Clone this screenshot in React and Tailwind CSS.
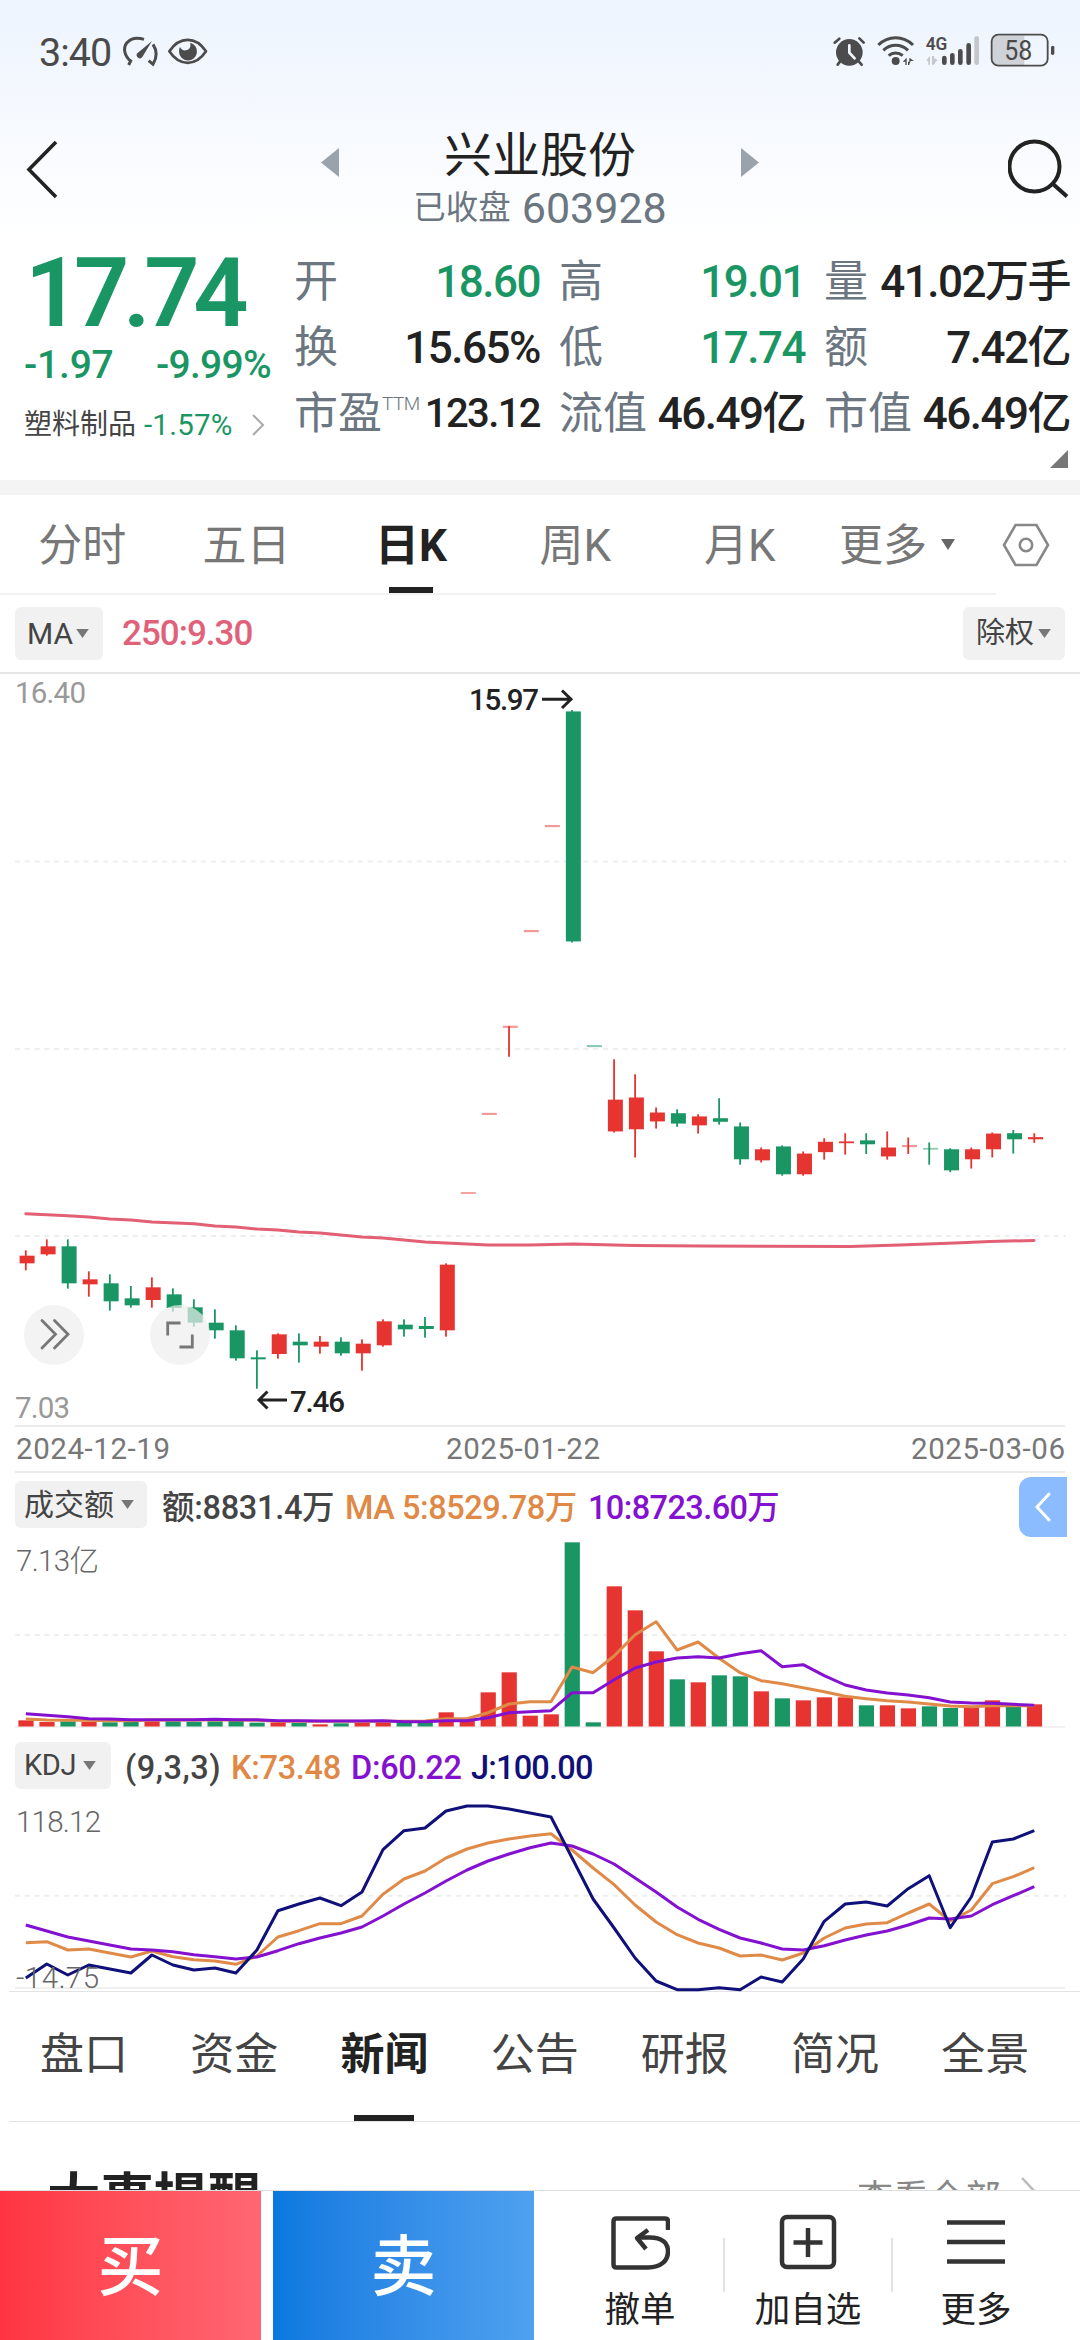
import React from "react";

const STEP = 21.01;
const X0 = 25.8;
const xAt = (i) => X0 + i * STEP;

const RED = "#e63430";
const GREEN = "#1a9664";

// [direction, body top, body bottom, high, low]
const firstHalf = [
  ["R", 227, 250, 211, 271], ["R", 199, 223, 178, 227], ["G", 199, 310, 178, 326],
  ["R", 298, 313, 274, 350], ["G", 310, 364, 283, 392], ["G", 355, 376, 318, 383],
  ["R", 322, 360, 292, 383], ["G", 343, 384, 325, 395], ["G", 382, 428, 358, 440],
  ["G", 428, 451, 388, 476], ["G", 451, 535, 436, 542], ["G", 532, 538, 511, 626],
  ["R", 463, 522, 460, 536], ["G", 485, 496, 460, 548], ["R", 485, 500, 468, 521],
  ["G", 485, 520, 472, 527], ["R", 491, 520, 478, 572], ["R", 424, 496, 418, 500],
  ["G", 434, 448, 418, 470], ["G", 438, 447, 411, 473], ["R", 254, 451, 250, 470],
].map(([d, ...v]) => [d, ...v.map((y) => 1180 + y / 3)]);

const secondHalf = [
  ["r", 1462, 1467, 1464, 1465], ["r", 1240, 1246, 1243, 1243], ["r", 996, 1002, 997, 1083],
  ["r", 728, 734, 731, 731], ["r", 434, 440, 437, 437], ["G", 116, 760, 112, 763],
  ["g", 1050, 1056, 1053, 1053], ["R", 1203, 1292, 1090, 1295], ["R", 1197, 1286, 1132, 1365],
  ["R", 1239, 1264, 1225, 1284], ["G", 1241, 1270, 1230, 1279], ["R", 1250, 1275, 1244, 1298],
  ["G", 1255, 1265, 1199, 1273], ["G", 1278, 1370, 1267, 1385], ["R", 1342, 1373, 1337, 1379],
  ["G", 1334, 1412, 1331, 1416], ["R", 1354, 1412, 1348, 1416], ["R", 1321, 1350, 1311, 1371],
  ["R", 1320, 1325, 1297, 1357], ["G", 1317, 1328, 1297, 1355], ["R", 1337, 1362, 1292, 1371],
  ["r", 1330, 1336, 1309, 1355], ["g", 1338, 1343, 1323, 1385], ["G", 1342, 1401, 1339, 1406],
  ["R", 1342, 1370, 1337, 1396], ["R", 1298, 1342, 1295, 1365], ["G", 1297, 1314, 1288, 1354],
  ["R", 1308, 1314, 1297, 1324],
].map(([d, ...v]) => [d, ...v.map((y) => 670 + y / 2.8)]);

const candles = [...firstHalf, ...secondHalf];

const ma250 = [
  [25.8, 1213.7], [67.8, 1215.7], [88.8, 1217], [110, 1219], [131, 1220], [152, 1222],
  [194, 1223.8], [215, 1226], [236, 1227], [257, 1229], [278, 1230], [299, 1232], [320, 1233],
  [341, 1235], [362, 1237], [383, 1238], [404, 1240], [425, 1242], [446, 1243], [488, 1245],
  [530, 1245], [573, 1244], [635, 1245.5], [701, 1246], [850, 1246.5], [900, 1245], [955, 1243], [990, 1241.5], [1034, 1240.5],
];

const volumes = [
  "R781", "R786", "G784", "R785", "G787", "G786", "R784", "G784", "G785", "G784", "G783", "G788",
  "R787", "G789", "R793", "G790", "R788", "R787", "G789", "G787", "R757", "R779", "R697", "R637",
  "R767", "R763", "G247", "G787", "R379", "R451", "R574", "G658", "R667", "G646", "G649", "R694",
  "G715", "R721", "R712", "R712", "G736", "R736", "R745", "G739", "G744", "R742", "R721", "G740", "R733",
];
const ma5 = [777, 780, 781, 781, 782, 782, 780, 780, 780, 780, 780, 781, 784, 784, 784, 784, 784, 784, 784, 783, 776, 776, 758, 732, 725, 725, 621, 638, 588, 524, 485, 570, 546, 595, 638, 662, 671, 683, 695, 709, 716, 722, 726, 732, 738, 740, 737, 737, 737];
const ma10 = [761, 766, 770, 776, 777, 779, 779, 779, 779, 778, 779, 779, 782, 782, 783, 783, 783, 782, 785, 785, 782, 782, 773, 758, 755, 752, 698, 698, 659, 624, 606, 594, 590, 594, 581, 572, 620, 614, 647, 675, 690, 699, 705, 713, 726, 729, 730, 733, 736];

const kLine = [638, 635, 660, 657, 669, 681, 663, 680, 689, 693, 703, 678, 621, 602, 581, 581, 558, 493, 447, 423, 384, 357, 339, 327, 318, 311, 360, 414, 464, 525, 576, 614, 639, 654, 678, 675, 690, 669, 624, 594, 582, 578, 549, 522, 573, 540, 461, 440, 413];
const dLine = [585, 603, 621, 633, 645, 657, 660, 665, 674, 680, 687, 681, 662, 641, 624, 609, 591, 558, 522, 489, 453, 420, 393, 372, 353, 339, 348, 372, 402, 444, 486, 531, 568, 598, 624, 639, 657, 660, 647, 630, 615, 603, 585, 564, 567, 558, 524, 497, 470];
const jLine = [744, 702, 735, 705, 717, 729, 675, 705, 720, 714, 729, 660, 542, 522, 504, 527, 486, 359, 302, 294, 243, 228, 228, 237, 249, 261, 384, 507, 594, 684, 753, 779, 779, 773, 779, 741, 756, 687, 574, 522, 516, 528, 476, 437, 593, 501, 336, 327, 302];

const toPoints = (arr, top) => arr.map((v, i) => `${xAt(i).toFixed(1)},${(top + v / 3).toFixed(1)}`).join(" ");

function Dashed({ y }) {
  return <line x1="15" x2="1066" y1={y} y2={y} stroke="#ecefed" strokeWidth="2" strokeDasharray="5 4.8" />;
}

function Caret({ className = "" }) {
  return (
    <svg viewBox="0 0 14 10" className={`h-[9px] w-[13px] ${className}`}>
      <path d="M0 0h14L7 10z" fill="#777" />
    </svg>
  );
}

function StatusBar() {
  return (
    <div className="flex h-[102px] items-center justify-between pl-[39px] pr-[10px]">
      <div className="flex h-[64px] items-center">
        <span className="mt-[3px] text-[39.5px] leading-[64px] tracking-[-1px] text-[#4a4a4a]">3:40</span>
        <svg viewBox="270 0 270 192" className="ml-[9px] mt-[2px] h-[64px] w-[90px]" fill="none" stroke="#4c4c4c">
          <path d="M296 135l6-12c-18-14-24-38-12-54 12-14 30-18 52-11" strokeWidth="9" />
          <path d="M369 73c12 18 12 40 0 60l-13-11" strokeWidth="9" />
          <path d="M366 63L322 100a9 9 0 1 0 15 11z" fill="#4c4c4c" stroke="none" />
          <path d="M418 94c30-46 80-46 110 0c-30 46-80 46-110 0z" strokeWidth="8" strokeLinejoin="round" />
          <path d="M480 68a27 27 0 1 1-33 27c0-6 1-10 3-14c4 8 10 11 17 10c12-2 17-12 13-23z" fill="#4c4c4c" stroke="none" />
        </svg>
      </div>
      <svg viewBox="0 0 750 192" className="mt-[2px] h-[64px] w-[250px]">
        <g fill="none" stroke="#4c4c4c" strokeWidth="8" strokeLinecap="round">
          <circle cx="88" cy="97" r="40" fill="#4c4c4c" stroke="none" />
          <path d="M88 76v22l16 17" stroke="#f2f7fe" />
          <path d="M44 68l14-12M118 55l13 13M62 122l-9 12M114 122l11 12" />
          <path d="M175 75c30-29 74-29 104 0M190 91c22-20 52-20 74 0M206 107c12-11 30-11 42 0" strokeLinecap="butt" strokeWidth="9" />
        </g>
        <circle cx="227" cy="123" r="12" fill="#4c4c4c" />
        <path d="M248 125l12-12v22h-4v-10zM264 113v22h4l0-10h-4zM268 113l14 10h-10l-4 10z" fill="#4c4c4c" />
        <text x="317" y="91" fontSize="54" fontWeight="600" textLength="65" lengthAdjust="spacingAndGlyphs" fill="#4c4c4c">4G</text>
        <path d="M318 122l12-14v26h-5v-12zM336 108h6v6l14 8h-7l-7 12h-6z" fill="#c3c6ca" />
        <g stroke="#4c4c4c" strokeWidth="14" strokeLinecap="round">
          <path d="M373 114v14M397 106v22M421 94v34M446 76v52" />
          <path d="M470 55v73" stroke="#c3c6ca" />
        </g>
        <path d="M534 47h79v88h-79q-16 0-16-16v-56q0-16 16-16z" fill="#cfd2d6" />
        <rect x="515" y="44" width="168" height="93" rx="20" fill="none" stroke="#4c4c4c" strokeWidth="5.5" />
        <rect x="693" y="77" width="10" height="28" rx="5" fill="#4c4c4c" />
        <text x="553" y="120" fontSize="84" textLength="84" lengthAdjust="spacingAndGlyphs" fill="#4a4a4a">58</text>
      </svg>
    </div>
  );
}

function TitleBar() {
  return (
    <div className="flex h-[138px] items-start justify-between">
      <svg viewBox="0 0 56 60" className="ml-[16px] mt-[38px] h-[60px] w-[56px]" fill="none" stroke="#222" strokeWidth="3.6">
        <path d="M40 2L13 29.500L40 57" />
      </svg>
      <div className="flex w-[438px] flex-col items-center">
        <div className="mt-[26px] flex h-[56px] w-full items-center justify-between">
          <svg viewBox="0 0 18 29" className="mt-[12px] h-[29px] w-[18px]"><path d="M18 0v29L0 14.500z" fill="#9aa3ab" /></svg>
          <h1 className="text-[48px] leading-[56px] text-[#222]">兴业股份</h1>
          <svg viewBox="0 0 18 29" className="mt-[12px] h-[29px] w-[18px]"><path d="M0 0v29L18 14.500z" fill="#9aa3ab" /></svg>
        </div>
        <div className="mt-px flex h-[46px] items-center text-[#6b7681]">
          <span className="text-[32.5px] leading-[46px]">已收盘</span>
          <span className="ml-[11px] text-[43px] leading-[46px]">603928</span>
        </div>
      </div>
      <svg viewBox="0 0 64 64" className="mr-[8px] mt-[34px] h-[64px] w-[64px]" fill="none" stroke="#222" strokeWidth="4">
        <circle cx="26.500" cy="30.500" r="25" />
        <path d="M45 48L59 60.500" />
      </svg>
    </div>
  );
}

const stats = [
  [
    { label: "开", value: "18.60", green: true },
    { label: "高", value: "19.01", green: true },
    { label: "量", value: "41.02万手" },
  ],
  [
    { label: "换", value: "15.65%" },
    { label: "低", value: "17.74", green: true },
    { label: "额", value: "7.42亿" },
  ],
  [
    { label: "市盈", sup: "TTM", value: "123.12", small: true },
    { label: "流值", value: "46.49亿" },
    { label: "市值", value: "46.49亿" },
  ],
];

function Quote() {
  return (
    <div className="flex h-[240px] bg-white">
      <div className="flex w-[294px] flex-col pl-[24px]">
        <div className="mt-[7px] h-[92px] pl-px text-[97px] font-semibold leading-[92px] tracking-[-6.4px] text-[#1a9664]">17.74</div>
        <div className="mt-[5px] flex h-[42px] items-center justify-between pr-[23px] text-[39px] font-medium leading-[42px] tracking-[-0.2px] text-[#1a9664]">
          <span>-1.97</span>
          <span className="tracking-[-0.7px]">-9.99%</span>
        </div>
        <div className="mt-[17px] flex h-[44px] items-center">
          <span className="text-[28px] leading-[44px] text-[#444]">塑料制品</span>
          <span className="ml-[8px] text-[29.5px] leading-[44px] tracking-[0.2px] text-[#1a9664]">-1.57%</span>
          <svg viewBox="0 0 14 22" className="ml-auto mr-[29px] h-[22px] w-[14px]" fill="none" stroke="#aaa" strokeWidth="2">
            <path d="M2 1l10 10L2 21" />
          </svg>
        </div>
      </div>
      <div className="flex flex-1 flex-col">
        <div className="mt-[9px] flex flex-col">
          {stats.map((row, r) => (
            <div key={r} className="flex h-[66px] gap-[19px]">
              {row.map((s) => (
                <div key={s.label} className="flex w-[246px] items-center justify-between">
                  <span className="flex whitespace-nowrap text-[44px] leading-[66px] text-[#6b7681]">
                    {s.label}
                    {s.sup && <span className="mt-[13px] text-[19px] font-light leading-[20px] tracking-[-0.5px]">{s.sup}</span>}
                  </span>
                  <span
                    className={`whitespace-nowrap font-medium leading-[66px] ${s.small ? "text-[40px] tracking-[-1.6px]" : "text-[44px] tracking-[-1.5px]"} ${s.green ? "text-[#1a9664]" : "text-[#222]"}`}
                  >
                    {s.value}
                  </span>
                </div>
              ))}
            </div>
          ))}
        </div>
        <svg viewBox="0 0 18 18" className="ml-auto mr-[12px] mt-[3px] h-[18px] w-[18px]"><path d="M18 0v18H0z" fill="#777" /></svg>
      </div>
    </div>
  );
}

function PeriodTabs() {
  return (
    <div className="flex h-[100px]">
      <div className="flex w-[996px] border-b-2 border-[#f2f2f2]">
        {["分时", "五日", "日K", "周K", "月K"].map((t) => (
          <div key={t} className="flex w-[164.4px] flex-col items-center justify-between">
            <span className={t === "日K" ? "mt-[15px] text-[44px] font-bold leading-[72px] text-[#222]" : "mt-[15px] text-[44px] leading-[72px] text-[#777]"}>{t}</span>
            {t === "日K" && <span className="h-[6px] w-[44px] bg-[#222]" />}
          </div>
        ))}
        <div className="ml-[17px] flex items-start">
          <span className="mt-[15px] text-[44px] leading-[72px] text-[#777]">更多</span>
          <svg viewBox="0 0 14 11" className="ml-[14px] mt-[44px] h-[11px] w-[14px]"><path d="M0 0h14L7 11z" fill="#666" /></svg>
        </div>
      </div>
      <svg viewBox="0 0 48 44" className="ml-[6px] mt-[28px] h-[44px] w-[48px]" fill="none" stroke="#888" strokeWidth="2.6">
        <path d="M13.500 2h21L46 22 34.500 42h-21L2 22z" />
        <circle cx="24" cy="22" r="6.200" />
      </svg>
    </div>
  );
}

function ChartTools() {
  return (
    <div className="flex h-[79px] items-center justify-between border-b-2 border-[#e6e6e6] px-[15px]">
      <div className="flex items-center">
        <div className="flex h-[53px] w-[88px] items-center rounded-[6px] bg-[#f1f1f1] pl-[12px]">
          <span className="text-[30px] leading-[53px] text-[#444]">MA</span>
          <Caret className="ml-[3px]" />
        </div>
        <span className="ml-[19px] text-[35px] font-medium leading-[53px] tracking-[-1px] text-[#e0627a]">250:9.30</span>
      </div>
      <div className="flex h-[53px] w-[102px] items-center rounded-[6px] bg-[#f1f1f1] pl-[13px]">
        <span className="text-[29px] leading-[53px] text-[#444]">除权</span>
        <Caret className="ml-[4px]" />
      </div>
    </div>
  );
}

function Candle({ i, c }) {
  const [d, top, bottom, high, low] = c;
  const thin = d === "r" || d === "g";
  const color = d === "R" || d === "r" ? RED : GREEN;
  const x = xAt(i);
  return (
    <g fill={color}>
      {low - high > 2 && <rect x={x - 0.9} y={high} width="1.8" height={low - high} />}
      <rect x={x - 6.2} y={top} width="15" height={bottom - top} opacity={thin ? 0.5 : 1} />
    </g>
  );
}

function PriceChart() {
  return (
    <div className="relative h-[799px]">
      <svg viewBox="0 674 1080 799" className="block h-[799px] w-[1080px]">
        {[861.5, 1049, 1236].map((y) => <Dashed key={y} y={y} />)}
        <path d="M15 1426H1065M15 1472H1065" stroke="#e9eceb" strokeWidth="2" />
        {candles.map((c, i) => <Candle key={i} i={i} c={c} />)}
        <polyline points={ma250.map((p) => p.join(",")).join(" ")} fill="none" stroke="#e25f74" strokeWidth="3" strokeLinejoin="round" strokeLinecap="round" />
        <g fontSize="29.5">
          <text x="15" y="703" fill="#999" textLength="71">16.40</text>
          <text x="15" y="1418" fill="#999" textLength="55">7.03</text>
          <g fill="#777">
            <text x="16" y="1459" textLength="154">2024-12-19</text>
            <text x="446" y="1459" textLength="154">2025-01-22</text>
            <text x="911" y="1459" textLength="154">2025-03-06</text>
          </g>
          <g fill="#222" fontWeight="500">
            <text x="469" y="709.500" textLength="70">15.97</text>
            <text x="290" y="1411.500" textLength="55">7.46</text>
          </g>
        </g>
        <g fill="none" stroke="#222" strokeWidth="3">
          <path d="M542 699.300H570M562 690.500L571 699.300L562 708" />
          <path d="M287 1400H259M267.500 1391.500L259 1400L267.500 1408.500" />
        </g>
      </svg>
      <div className="absolute left-[24px] top-[631px] flex h-[60px] w-[60px] rounded-full bg-[#eeeeee]/70">
        <svg viewBox="24 1305 60 60" className="h-[60px] w-[60px]" fill="none" stroke="#777" strokeWidth="2.8" strokeLinecap="round">
          <path d="M42 1320.500L55.500 1334.300L42 1348M54.500 1320.500L68 1334.300L54.500 1348" />
        </svg>
      </div>
      <div className="absolute left-[150px] top-[631px] flex h-[60px] w-[60px] rounded-full bg-[#eeeeee]/70">
        <svg viewBox="150 1305 60 60" className="h-[60px] w-[60px]" fill="none" stroke="#777" strokeWidth="2.8">
          <path d="M167.700 1335.500V1323H180.500M192.300 1334.500V1347H179.500" />
        </svg>
      </div>
    </div>
  );
}

function VolumeChart() {
  return (
    <>
      <div className="flex h-[64px] items-center pl-[15px] pt-[1px] text-[32.5px] font-medium leading-[47px]">
        <div className="mb-[2px] flex h-[47px] w-[132px] items-center rounded-[6px] bg-[#f1f1f1] pl-[9px]">
          <span className="text-[30px] font-normal leading-[47px] text-[#444]">成交额</span>
          <Caret className="ml-[7px]" />
        </div>
        <span className="ml-[15px] mt-[5px] w-[183px] tracking-[-0.3px] text-[#444]">额:8831.4万</span>
        <span className="mt-[5px] w-[243px] tracking-[-0.45px] text-[#e08845]">MA 5:8529.78万</span>
        <span className="mt-[5px] tracking-[-0.6px] text-[#8410d0]">10:8723.60万</span>
        <div className="ml-auto mr-[13px] mt-[2px] flex h-[60px] w-[48px] items-center justify-center rounded-l-[12px] bg-[#8bbcff]">
          <svg viewBox="0 0 16 30" className="h-[30px] w-[16px]" fill="none" stroke="#fff" strokeWidth="3" strokeLinecap="round"><path d="M14 2L2 15l12 13" /></svg>
        </div>
      </div>
      <svg viewBox="0 1537 1080 197" className="block h-[197px] w-[1080px]">
        <Dashed y={1635} />
        <path d="M15 1727H1065" stroke="#ededed" strokeWidth="1.6" />
        <text x="16" y="1571" fontSize="29.500" fontWeight="300" fill="#666" textLength="83">7.13亿</text>
        {volumes.map((v, i) => {
          const top = 1460 + Number(v.slice(1)) / 3;
          return <rect key={i} x={xAt(i) - 7.4} y={top} width="15.200" height={1726.5 - top} fill={v[0] === "R" ? RED : GREEN} />;
        })}
        <polyline points={toPoints(ma5, 1460)} fill="none" stroke="#e08a48" strokeWidth="3" strokeLinejoin="round" />
        <polyline points={toPoints(ma10, 1460)} fill="none" stroke="#8410d0" strokeWidth="3" strokeLinejoin="round" />
      </svg>
    </>
  );
}

function KdjChart() {
  return (
    <>
      <div className="flex h-[63px] items-center pl-[15px] text-[32.5px] font-medium leading-[47px]">
        <div className="flex h-[47px] w-[96px] items-center rounded-[6px] bg-[#f1f1f1] pl-[9px]">
          <span className="text-[29px] font-normal leading-[47px] tracking-[-0.4px] text-[#444]">KDJ</span>
          <Caret className="ml-[7px]" />
        </div>
        <span className="ml-[14px] mt-[6px] w-[106px] tracking-[0.5px] text-[#444]">(9,3,3)</span>
        <span className="mt-[6px] w-[120px] tracking-[-0.3px] text-[#e08845]">K:73.48</span>
        <span className="mt-[6px] w-[120px] tracking-[-0.3px] text-[#8410d0]">D:60.22</span>
        <span className="mt-[6px] tracking-[-0.8px] text-[#10107a]">J:100.00</span>
      </div>
      <svg viewBox="0 1797 1080 195" className="block h-[195px] w-[1080px] overflow-visible">
        <Dashed y={1895.7} />
        <path d="M15 1988H1065" stroke="#f0f0f0" strokeWidth="2" />
        <path d="M9 1991.500H1080" stroke="#e3e3e3" strokeWidth="1" />
        {[[kLine, "#e08a48"], [dLine, "#8410d0"], [jLine, "#10107a"]].map(([line, color]) => (
          <polyline key={color} points={toPoints(line, 1730)} fill="none" stroke={color} strokeWidth="3" strokeLinejoin="round" />
        ))}
        <g fontSize="29.500" fontWeight="300" fill="#666">
          <text x="16" y="1832" textLength="85">118.12</text>
          <text x="16" y="1987.500" textLength="83">-14.75</text>
        </g>
      </svg>
    </>
  );
}

function NewsTabs() {
  return (
    <div className="ml-[9px] flex h-[130px] border-b border-[#e3e3e3]">
      {["盘口", "资金", "新闻", "公告", "研报", "简况", "全景"].map((t) => (
        <div key={t} className="flex w-[150.2px] flex-col items-center justify-between">
          <span className={t === "新闻" ? "mt-[27px] text-[44px] font-bold leading-[72px] text-[#222]" : "mt-[27px] text-[44px] leading-[72px] text-[#444]"}>{t}</span>
          {t === "新闻" && <span className="h-[6px] w-[60px] bg-[#222]" />}
        </div>
      ))}
    </div>
  );
}

function NewsPreview() {
  return (
    <div className="flex h-[68px] items-start justify-between overflow-hidden pl-[47px] pr-[41px]">
      <h2 className="mt-[39px] text-[53.5px] font-bold leading-[76px] text-[#222]">大事提醒</h2>
      <div className="mt-[50px] flex items-start">
        <span className="text-[36px] leading-[54px] text-[#888]">查看全部</span>
        <svg viewBox="0 0 18 34" className="ml-[20px] mt-[5px] h-[34px] w-[18px]" fill="none" stroke="#bbb" strokeWidth="2.500"><path d="M1 1l15 16L1 33" /></svg>
      </div>
    </div>
  );
}

function Action({ label, children }) {
  return (
    <div className="flex w-[166px] flex-col items-center">
      <svg viewBox="0 0 60 60" className="mt-[21px] h-[60px] w-[60px]" fill="none" stroke="#333" strokeWidth="4.500" strokeLinejoin="round">
        {children}
      </svg>
      <span className="mt-[8px] text-[35.5px] leading-[60px] text-[#222]">{label}</span>
    </div>
  );
}

function BottomBar() {
  return (
    <div className="flex h-[150px] border-t border-[#dedede] bg-white">
      <button className="w-[261px] bg-linear-to-r from-[#ff3341] to-[#ff6672] pt-[5px] text-[66px] font-medium leading-[144px] text-white">买</button>
      <button className="ml-[12px] w-[261px] bg-linear-to-r from-[#0a78df] to-[#4fa1ef] pt-[5px] text-[66px] font-medium leading-[144px] text-white">卖</button>
      <div className="ml-[23px] flex">
        <Action label="撤单">
          <path d="M58 18V9.500q0-3-3-3H6.500q-3 0-3 3v43q0 3 3 3H38c13 0 20-7 20-16s-7-14-18-14H28" />
          <path d="M38 18L27 26L36 37" />
        </Action>
        <span className="mt-[47px] h-[54px] w-[2px] bg-[#e2e2e2]" />
        <Action label="加自选">
          <rect x="4" y="5" width="52" height="50" rx="5" />
          <path d="M30 16v29M15.500 30.500h29" />
        </Action>
        <span className="mt-[47px] h-[54px] w-[2px] bg-[#e2e2e2]" />
        <Action label="更多">
          <path d="M1 10.500h58M1 30h58M1 49.500h58" />
        </Action>
      </div>
    </div>
  );
}

export default function App() {
  return (
    <div className="flex h-[2340px] w-[1080px] flex-col overflow-hidden bg-white font-['Roboto','Noto_Sans_CJK_SC',sans-serif]">
      <div className="bg-linear-to-b from-[#edf4fe] to-white">
        <StatusBar />
        <TitleBar />
      </div>
      <Quote />
      <div className="h-[15px] bg-[#f4f4f4]" />
      <PeriodTabs />
      <ChartTools />
      <PriceChart />
      <VolumeChart />
      <KdjChart />
      <NewsTabs />
      <NewsPreview />
      <BottomBar />
    </div>
  );
}
